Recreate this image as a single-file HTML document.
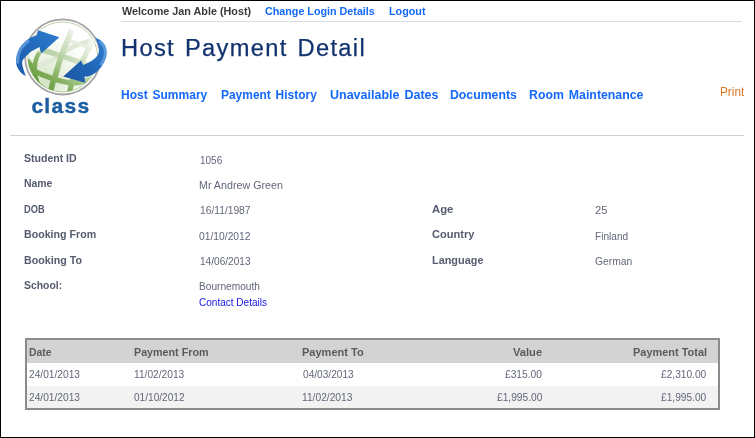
<!DOCTYPE html>
<html><head><meta charset="utf-8"><title>Host Payment Detail</title>
<style>
html,body{margin:0;padding:0;}
body{width:755px;height:438px;position:relative;overflow:hidden;background:#fff;font-family:"Liberation Sans",sans-serif;}
#frame{position:absolute;left:0;top:0;width:753px;height:436px;border:1px solid #000;z-index:10;}
.t{position:absolute;white-space:nowrap;filter:blur(0.35px);transform-origin:0 0;line-height:1;}
.hr{position:absolute;height:1px;}
.box{position:absolute;}
</style></head><body>
<div id="frame"></div>
<div class="hr" style="left:121px;top:21px;width:621px;background:#dcdcdc;"></div>
<div class="hr" style="left:10px;top:135px;width:734px;background:#d2d2d2;"></div>
<svg style="position:absolute;left:0;top:0;filter:blur(0.4px);" width="120" height="125" viewBox="0 0 120 125">
<defs>
<radialGradient id="gfill" gradientUnits="userSpaceOnUse" cx="44" cy="82" r="52">
<stop offset="0" stop-color="#d3e3c4"/><stop offset="0.5" stop-color="#edf4e7"/><stop offset="1" stop-color="#ffffff"/>
</radialGradient>
<linearGradient id="ggrid" gradientUnits="userSpaceOnUse" x1="38" y1="92" x2="90" y2="30">
<stop offset="0" stop-color="#5b9430"/><stop offset="0.28" stop-color="#86b161"/><stop offset="0.5" stop-color="#b5cfa0"/><stop offset="0.72" stop-color="#d9e6cf"/><stop offset="0.9" stop-color="#f3f7ef"/><stop offset="1" stop-color="#ffffff"/>
</linearGradient>
<linearGradient id="ggrid2" gradientUnits="userSpaceOnUse" x1="40" y1="50" x2="86" y2="65">
<stop offset="0" stop-color="#b7d0a3"/><stop offset="0.6" stop-color="#c6dab6"/><stop offset="1" stop-color="#d8e5cc"/>
</linearGradient>
<linearGradient id="gb1" gradientUnits="userSpaceOnUse" x1="18" y1="75" x2="55" y2="30">
<stop offset="0" stop-color="#1d5cab"/><stop offset="0.5" stop-color="#2268ba"/><stop offset="1" stop-color="#2f7ccf"/>
</linearGradient>
<linearGradient id="gb2" gradientUnits="userSpaceOnUse" x1="106" y1="40" x2="64" y2="80">
<stop offset="0" stop-color="#2f7ccf"/><stop offset="0.5" stop-color="#2167b8"/><stop offset="1" stop-color="#1a57a4"/>
</linearGradient>
<clipPath id="gclip"><circle cx="62.7" cy="56.9" r="35"/></clipPath>
<clipPath id="lclip"><path d="M36.7 35.3 C35.2 36.0 30.5 37.4 27.8 39.4 C25.1 41.3 22.1 44.3 20.3 46.9 C18.4 49.5 17.5 52.4 16.8 55.1 C16.2 57.9 15.7 60.7 16.2 63.4 C16.6 66.0 18.0 68.7 19.6 70.9 C21.2 73.1 24.7 75.5 25.8 76.4 C25.3 74.9 23.6 70.0 23.0 67.5 C22.4 65.0 21.9 63.1 22.3 61.3 C22.8 59.5 24.2 58.2 25.8 56.5 C27.4 54.8 29.6 52.6 31.9 51.0 C34.2 49.4 38.2 47.6 39.5 46.9 L41.2 53.5 L59.3 37.3 L38.1 30.2 Z"/></clipPath>
<clipPath id="rclip"><path d="M83.1 64.9 C84.2 64.4 87.7 63.1 89.7 62.0 C91.7 60.9 93.9 59.3 95.3 58.0 C96.7 56.7 97.7 55.6 98.3 54.0 C98.9 52.4 99.1 50.2 99.0 48.5 C98.9 46.8 98.3 45.4 97.7 43.6 C97.1 41.8 95.7 38.6 95.3 37.6 C96.2 38.1 99.2 39.2 100.8 40.5 C102.4 41.8 104.1 43.5 105.1 45.4 C106.1 47.2 106.5 49.4 106.6 51.6 C106.7 53.8 106.5 56.0 105.7 58.4 C104.9 60.8 103.5 63.5 102.0 65.8 C100.5 68.0 98.7 70.2 96.5 71.9 C94.3 73.6 91.1 75.4 89.1 76.2 C87.1 77.0 85.3 76.5 84.5 76.6 L85.1 82.7 L63.2 76.6 L81.0 60.4 Z"/></clipPath>
</defs>
<circle cx="62.7" cy="56.9" r="37.6" fill="#fff" stroke="#a4a4a4" stroke-width="1.8"/>
<circle cx="62.7" cy="56.9" r="35" fill="url(#gfill)" stroke="#a9c68f" stroke-width="0.8"/>
<g clip-path="url(#gclip)" fill="none" stroke="url(#ggrid)">
<path d="M36.0 67.2 C36.5 67.0 37.1 66.7 38.9 65.9 C40.7 65.1 44.3 63.8 47.0 62.5 C49.7 61.2 52.7 59.7 55.2 58.2 C57.7 56.7 59.8 55.0 62.0 53.5 C64.2 52.0 66.3 50.4 68.6 49.1 C70.9 47.8 73.5 46.5 76.0 45.5 C78.5 44.5 81.2 43.6 83.9 42.9 C86.6 42.1 90.7 41.3 92.0 41.0 " stroke-width="5.0" stroke="#dfe9d6"/>
<path d="M66.0 39.5 C66.4 39.6 66.4 39.5 68.4 40.2 C70.4 40.9 74.8 42.3 78.0 43.5 C81.2 44.7 85.2 46.4 87.5 47.4 C89.8 48.4 91.2 49.1 92.0 49.5 " stroke-width="3.4" stroke="#e6eedf"/>
<path d="M40.0 49.5 C40.6 49.7 41.7 49.9 43.7 50.5 C45.7 51.1 49.3 52.1 52.0 53.0 C54.7 53.9 57.0 54.8 60.0 55.8 C63.0 56.8 67.0 57.8 70.0 58.8 C73.0 59.8 75.5 60.6 78.2 61.6 C80.9 62.6 84.7 64.4 86.0 65.0 " stroke-width="5.3" stroke="url(#ggrid2)"/>
<path d="M50.3 93.0 C50.8 91.2 52.1 85.0 53.0 82.0 C53.9 79.0 54.3 78.7 55.5 75.0 C56.7 71.3 58.6 64.3 60.0 60.0 C61.4 55.7 62.7 52.5 64.0 49.0 C65.3 45.5 66.8 42.2 68.0 39.0 C69.2 35.8 70.9 31.5 71.5 30.0 " stroke-width="5.6" />
<path d="M69.3 94.0 C69.8 92.0 71.0 85.5 72.0 82.0 C73.0 78.5 74.2 75.8 75.5 72.9 C76.8 70.0 78.6 67.0 80.0 64.5 C81.4 62.0 82.8 60.2 84.0 58.0 C85.2 55.8 86.0 53.5 87.0 51.5 C88.0 49.5 88.8 47.9 89.7 45.8 C90.6 43.7 92.0 40.1 92.5 39.0 " stroke-width="5.2" />
<path d="M39.5 52.4 C39.0 53.3 37.3 56.2 36.6 58.0 C35.9 59.8 35.6 60.7 35.3 63.0 C35.0 65.3 34.4 68.3 34.7 71.6 C35.1 74.8 36.5 79.8 37.4 82.5 C38.3 85.2 39.6 87.1 40.0 88.0 " stroke-width="4.4" />
<path d="M27.0 60.0 C27.6 60.8 29.0 63.1 30.5 65.0 C32.0 66.9 33.2 69.7 36.0 71.6 C38.8 73.5 43.3 75.0 47.0 76.5 C50.7 78.0 54.2 79.3 58.0 80.3 C61.8 81.3 66.3 82.2 70.0 82.6 C73.7 82.9 76.0 83.2 80.0 82.4 C84.0 81.6 91.7 78.7 94.0 78.0 " stroke-width="5.3" />
<path d="M28.0 66.0 C28.6 67.2 29.9 70.0 31.6 73.0 C33.3 76.0 35.1 80.9 38.0 84.1 C40.9 87.3 45.2 90.3 49.2 92.1 C53.2 93.9 59.9 94.5 62.0 95.0 " stroke-width="5.0" />
</g>
<path d="M36.7 35.3 C35.2 36.0 30.5 37.4 27.8 39.4 C25.1 41.3 22.1 44.3 20.3 46.9 C18.4 49.5 17.5 52.4 16.8 55.1 C16.2 57.9 15.7 60.7 16.2 63.4 C16.6 66.0 18.0 68.7 19.6 70.9 C21.2 73.1 24.7 75.5 25.8 76.4 C25.3 74.9 23.6 70.0 23.0 67.5 C22.4 65.0 21.9 63.1 22.3 61.3 C22.8 59.5 24.2 58.2 25.8 56.5 C27.4 54.8 29.6 52.6 31.9 51.0 C34.2 49.4 38.2 47.6 39.5 46.9 L41.2 53.5 L59.3 37.3 L38.1 30.2 Z" fill="url(#gb1)"/>
<path d="M27.8 39.4 C26.6 40.6 22.1 44.3 20.3 46.9 C18.4 49.5 17.5 52.4 16.8 55.1 C16.2 57.9 16.3 62.0 16.2 63.4 " fill="none" stroke="#7ab4ee" stroke-width="6" opacity="0.6" clip-path="url(#lclip)"/>
<path d="M83.1 64.9 C84.2 64.4 87.7 63.1 89.7 62.0 C91.7 60.9 93.9 59.3 95.3 58.0 C96.7 56.7 97.7 55.6 98.3 54.0 C98.9 52.4 99.1 50.2 99.0 48.5 C98.9 46.8 98.3 45.4 97.7 43.6 C97.1 41.8 95.7 38.6 95.3 37.6 C96.2 38.1 99.2 39.2 100.8 40.5 C102.4 41.8 104.1 43.5 105.1 45.4 C106.1 47.2 106.5 49.4 106.6 51.6 C106.7 53.8 106.5 56.0 105.7 58.4 C104.9 60.8 103.5 63.5 102.0 65.8 C100.5 68.0 98.7 70.2 96.5 71.9 C94.3 73.6 91.1 75.4 89.1 76.2 C87.1 77.0 85.3 76.5 84.5 76.6 L85.1 82.7 L63.2 76.6 L81.0 60.4 Z" fill="url(#gb2)"/>
<path d="M100.8 40.5 C101.5 41.3 104.1 43.5 105.1 45.4 C106.1 47.2 106.5 49.4 106.6 51.6 C106.7 53.8 106.5 56.0 105.7 58.4 C104.9 60.8 102.6 64.6 102.0 65.8 " fill="none" stroke="#7ab4ee" stroke-width="5.5" opacity="0.6" clip-path="url(#rclip)"/>
<text x="31.4" y="112.5" font-family="Liberation Sans, sans-serif" font-weight="bold" font-size="21" letter-spacing="1.3" fill="#1b5d9f" stroke="#1b5d9f" stroke-width="0.4">class</text>
</svg>

<div class="box" style="left:25px;top:338px;width:691px;height:68px;border:2px solid #8b8b8b;"></div>
<div class="box" style="left:27px;top:340px;width:691px;height:23px;background:#d3d3d3;"></div>
<div class="box" style="left:27px;top:386px;width:691px;height:22px;background:#f2f2f2;"></div>
<span class="t" id="t1" style="left:121.50px;top:6.00px;font-size:10.5px;font-weight:bold;color:#3a3a3a;transform:scaleX(1.0293);">Welcome Jan Able (Host)</span>
<span class="t" id="t2" style="left:264.75px;top:6.00px;font-size:10.5px;font-weight:bold;color:#1468fa;transform:scaleX(1.0230);">Change Login Details</span>
<span class="t" id="t3" style="left:389.00px;top:6.00px;font-size:10.5px;font-weight:bold;color:#1468fa;transform:scaleX(1.0274);">Logout</span>
<span class="t" id="title" style="left:121.25px;top:37.00px;font-size:23px;font-weight:normal;color:#12336f;transform:scaleX(1.0289);letter-spacing:1.3px;word-spacing:1.9px;-webkit-text-stroke:0.25px #12336f;">Host Payment Detail</span>
<span class="t" id="n1" style="left:121.00px;top:88.00px;font-size:13px;font-weight:bold;color:#1468fa;transform:scaleX(0.9238);word-spacing:1.6px;">Host Summary</span>
<span class="t" id="n2" style="left:221.00px;top:88.00px;font-size:13px;font-weight:bold;color:#1468fa;transform:scaleX(0.9194);word-spacing:1.6px;">Payment History</span>
<span class="t" id="n3" style="left:329.50px;top:88.00px;font-size:13px;font-weight:bold;color:#1468fa;transform:scaleX(0.9614);word-spacing:1.6px;">Unavailable Dates</span>
<span class="t" id="n4" style="left:450.00px;top:88.00px;font-size:13px;font-weight:bold;color:#1468fa;transform:scaleX(0.9446);">Documents</span>
<span class="t" id="n5" style="left:529.25px;top:88.00px;font-size:13px;font-weight:bold;color:#1468fa;transform:scaleX(0.9473);word-spacing:1.6px;">Room Maintenance</span>
<span class="t" id="print" style="left:719.75px;top:86.00px;font-size:12px;font-weight:normal;color:#dd7722;transform:scaleX(0.9811);">Print</span>
<span class="t" id="l1" style="left:23.90px;top:153.00px;font-size:10.5px;font-weight:bold;color:#565c70;transform:scaleX(1.0029);">Student ID</span>
<span class="t" id="l2" style="left:23.90px;top:178.00px;font-size:10.5px;font-weight:bold;color:#565c70;transform:scaleX(0.9932);">Name</span>
<span class="t" id="l3" style="left:23.90px;top:204.00px;font-size:10.5px;font-weight:bold;color:#565c70;transform:scaleX(0.8822);">DOB</span>
<span class="t" id="l4" style="left:23.90px;top:229.00px;font-size:10.5px;font-weight:bold;color:#565c70;transform:scaleX(1.0142);">Booking From</span>
<span class="t" id="l5" style="left:23.90px;top:255.00px;font-size:10.5px;font-weight:bold;color:#565c70;transform:scaleX(1.0195);">Booking To</span>
<span class="t" id="l6" style="left:23.90px;top:280.00px;font-size:10.5px;font-weight:bold;color:#565c70;transform:scaleX(0.9894);">School:</span>
<span class="t" id="v1" style="left:199.70px;top:155.00px;font-size:10.5px;font-weight:normal;color:#62677a;transform:scaleX(0.9507);">1056</span>
<span class="t" id="v2" style="left:199.10px;top:180.00px;font-size:10.5px;font-weight:normal;color:#62677a;transform:scaleX(1.0196);">Mr Andrew Green</span>
<span class="t" id="v3" style="left:199.70px;top:205.00px;font-size:10.5px;font-weight:normal;color:#62677a;transform:scaleX(0.9757);">16/11/1987</span>
<span class="t" id="v4" style="left:199.10px;top:231.00px;font-size:10.5px;font-weight:normal;color:#62677a;transform:scaleX(0.9808);">01/10/2012</span>
<span class="t" id="v5" style="left:199.70px;top:256.00px;font-size:10.5px;font-weight:normal;color:#62677a;transform:scaleX(0.9617);">14/06/2013</span>
<span class="t" id="v6" style="left:199.10px;top:281.00px;font-size:10.5px;font-weight:normal;color:#62677a;transform:scaleX(0.9664);">Bournemouth</span>
<span class="t" id="v7" style="left:199.10px;top:297.00px;font-size:10.5px;font-weight:normal;color:#1414e6;transform:scaleX(0.9556);">Contact Details</span>
<span class="t" id="l7" style="left:432.40px;top:204.00px;font-size:10.5px;font-weight:bold;color:#565c70;transform:scaleX(1.0777);">Age</span>
<span class="t" id="l8" style="left:432.40px;top:229.00px;font-size:10.5px;font-weight:bold;color:#565c70;transform:scaleX(1.0537);">Country</span>
<span class="t" id="l9" style="left:432.40px;top:255.00px;font-size:10.5px;font-weight:bold;color:#565c70;transform:scaleX(1.0377);">Language</span>
<span class="t" id="v8" style="left:595.00px;top:205.00px;font-size:10.5px;font-weight:normal;color:#62677a;transform:scaleX(1.0586);">25</span>
<span class="t" id="v9" style="left:595.00px;top:231.00px;font-size:10.5px;font-weight:normal;color:#62677a;transform:scaleX(0.9630);">Finland</span>
<span class="t" id="v10" style="left:595.00px;top:256.00px;font-size:10.5px;font-weight:normal;color:#62677a;transform:scaleX(0.9813);">German</span>
<span class="t" id="h1" style="left:28.50px;top:347.00px;font-size:10.5px;font-weight:bold;color:#5a5a5a;transform:scaleX(0.9935);">Date</span>
<span class="t" id="h2" style="left:134.00px;top:347.00px;font-size:10.5px;font-weight:bold;color:#5a5a5a;transform:scaleX(1.0210);">Payment From</span>
<span class="t" id="h3" style="left:301.50px;top:347.00px;font-size:10.5px;font-weight:bold;color:#5a5a5a;transform:scaleX(1.0494);">Payment To</span>
<span class="t" id="h4" style="left:513.00px;top:347.00px;font-size:10.5px;font-weight:bold;color:#5a5a5a;transform:scaleX(1.0595);">Value</span>
<span class="t" id="h5" style="left:633.25px;top:347.00px;font-size:10.5px;font-weight:bold;color:#5a5a5a;transform:scaleX(1.0439);">Payment Total</span>
<span class="t" id="a1" style="left:29.25px;top:369.00px;font-size:10.5px;font-weight:normal;color:#62677a;transform:scaleX(0.9709);">24/01/2013</span>
<span class="t" id="a2" style="left:134.00px;top:369.00px;font-size:10.5px;font-weight:normal;color:#62677a;transform:scaleX(0.9703);">11/02/2013</span>
<span class="t" id="a3" style="left:302.50px;top:369.00px;font-size:10.5px;font-weight:normal;color:#62677a;transform:scaleX(0.9653);">04/03/2013</span>
<span class="t" id="a4" style="left:505.00px;top:369.00px;font-size:10.5px;font-weight:normal;color:#62677a;transform:scaleX(0.9706);">£315.00</span>
<span class="t" id="a5" style="left:661.25px;top:369.00px;font-size:10.5px;font-weight:normal;color:#62677a;transform:scaleX(0.9687);">£2,310.00</span>
<span class="t" id="b1" style="left:29.25px;top:392.00px;font-size:10.5px;font-weight:normal;color:#62677a;transform:scaleX(0.9709);">24/01/2013</span>
<span class="t" id="b2" style="left:134.00px;top:392.00px;font-size:10.5px;font-weight:normal;color:#62677a;transform:scaleX(0.9612);">01/10/2012</span>
<span class="t" id="b3" style="left:302.25px;top:392.00px;font-size:10.5px;font-weight:normal;color:#62677a;transform:scaleX(0.9743);">11/02/2013</span>
<span class="t" id="b4" style="left:497.00px;top:392.00px;font-size:10.5px;font-weight:normal;color:#62677a;transform:scaleX(0.9707);">£1,995.00</span>
<span class="t" id="b5" style="left:661.25px;top:392.00px;font-size:10.5px;font-weight:normal;color:#62677a;transform:scaleX(0.9687);">£1,995.00</span>
</body></html>
